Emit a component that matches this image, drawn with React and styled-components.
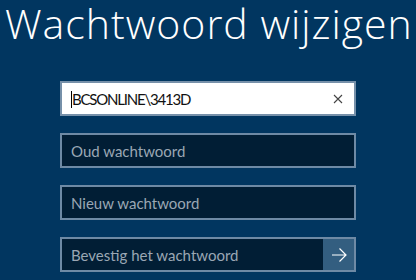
import React from 'react';
import styled, { createGlobalStyle } from 'styled-components';

const GlobalStyle = createGlobalStyle`
  html, body {
    margin: 0;
    padding: 0;
    background: #013660;
    overflow: hidden;
  }
`;

const Page = styled.div`
  width: 416px;
  height: 280px;
  background: #013660;
  font-family: "Lato", "Open Sans", sans-serif;
`;

const Title = styled.h1`
  margin: 0;
  padding: 0 0 0 5px;
  font-family: "Open Sans", "Noto Sans", sans-serif;
  font-size: 41px;
  font-weight: 300;
  letter-spacing: 1px;
  line-height: 46px;
  height: 81px;
  color: #ffffff;
  white-space: nowrap;
`;

const Form = styled.div`
  display: flex;
  flex-direction: column;
  gap: 17px;
  width: 296px;
  margin-left: 60px;
`;

const Field = styled.div`
  box-sizing: border-box;
  display: flex;
  align-items: center;
  height: 35px;
  border: 2px solid ${p => (p.$active ? '#7690a9' : '#6e8aa5')};
  background: ${p => (p.$active ? '#ffffff' : '#011e35')};
`;

const Text = styled.span`
  flex: 1;
  padding-left: 9px;
  font-size: 15px;
  letter-spacing: ${p => (p.$placeholder ? '0' : '-1.2px')};
  color: ${p => (p.$placeholder ? '#9aa7b4' : '#111111')};
  white-space: nowrap;
`;

const Caret = styled.span`
  display: inline-block;
  width: 1px;
  height: 17px;
  margin-right: 0;
  background: #000;
  vertical-align: -3px;
`;

const Clear = styled.span`
  display: flex;
  align-items: center;
  justify-content: center;
  width: 32px;
  height: 100%;
`;

const Submit = styled.span`
  display: flex;
  align-items: center;
  justify-content: center;
  width: 31px;
  height: 100%;
  background: #335e80;
`;

export default function App() {
  return (
    <Page>
      <GlobalStyle />
      <Title>Wachtwoord wijzigen</Title>
      <Form>
        <Field $active>
          <Text><Caret />BCSONLINE\3413D</Text>
          <Clear>
            <svg width="10" height="10" viewBox="0 0 10 10">
              <path d="M1 1L9 9M9 1L1 9" stroke="#444" strokeWidth="1.1" />
            </svg>
          </Clear>
        </Field>
        <Field>
          <Text $placeholder>Oud wachtwoord</Text>
        </Field>
        <Field>
          <Text $placeholder>Nieuw wachtwoord</Text>
        </Field>
        <Field>
          <Text $placeholder>Bevestig het wachtwoord</Text>
          <Submit>
            <svg width="16" height="14" viewBox="0 0 16 14">
              <path d="M1 7H15M8.5 0.5L15 7L8.5 13.5" stroke="#fff" strokeWidth="1.2" fill="none" />
            </svg>
          </Submit>
        </Field>
      </Form>
    </Page>
  );
}
